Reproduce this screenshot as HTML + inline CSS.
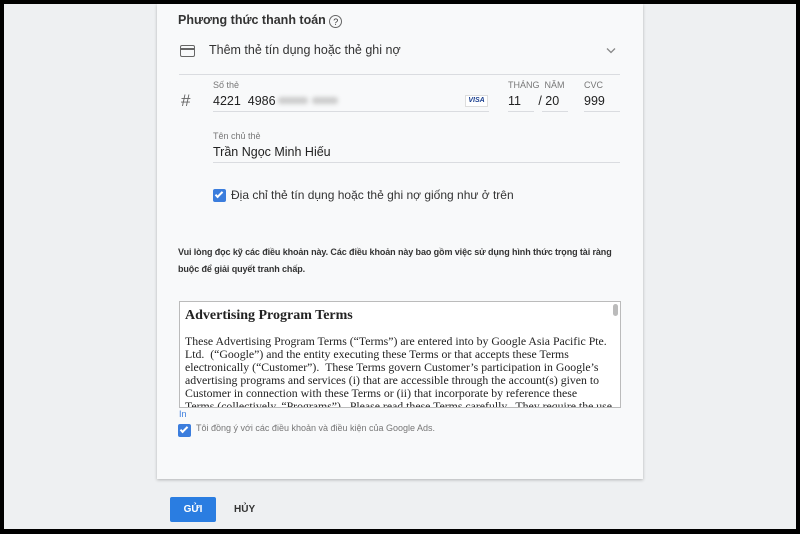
<!DOCTYPE html>
<html><head><meta charset="utf-8"><style>
*{margin:0;padding:0;box-sizing:border-box}
body{width:800px;height:534px;background:#000;position:relative;overflow:hidden;font-family:"Liberation Sans",Arial,sans-serif;color:#222}
.bg{position:absolute;left:4px;top:4px;width:792px;height:525px;background:#eef0f2}
.card{position:absolute;left:157px;top:4px;width:486px;height:475px;background:#f8f9fa;box-shadow:0 1px 3px rgba(0,0,0,.25)}
.a{position:absolute;white-space:nowrap}
.line{position:absolute;height:1px;background:#dadce0}
.lbl{font-size:9px;color:#777}
.chk{position:absolute;width:13px;height:13px;background:#3b7ddd;border-radius:2px}
.ta{position:absolute;left:179px;top:301px;width:442px;height:107px;background:#fff;border:1px solid #bbb;overflow:hidden;font-family:"Liberation Serif",serif;padding:6px 20px 0 5px}
</style></head><body>
<div class="bg"></div>
<div class="card"></div>
<div class="a" style="left:178px;top:13px;font-size:12.5px;font-weight:bold;color:#333">Phương thức thanh toán <span style="display:inline-block;width:13px;height:13px;border:1px solid #666;border-radius:50%;font-size:9px;text-align:center;line-height:12px;font-weight:normal;vertical-align:-1px">?</span></div>
<div class="a" style="left:180px;top:45px;width:15px;height:12px;border:1.5px solid #666;border-radius:2px"><div style="margin-top:2px;height:2px;background:#666"></div></div>
<div class="a" style="left:209px;top:43px;font-size:12.5px;color:#333">Thêm thẻ tín dụng hoặc thẻ ghi nợ</div>
<svg class="a" style="left:606px;top:47px" width="10" height="7"><path d="M1 1.5L5 5.5L9 1.5" stroke="#888" stroke-width="1.3" fill="none"/></svg>
<div class="line" style="left:179px;top:74px;width:441px"></div>
<div class="a lbl" style="left:213px;top:80px">Số thẻ</div>
<div class="a" style="left:181px;top:91px;font-size:17px;color:#666">#</div>
<div class="a" style="left:213px;top:94px;font-size:12.5px">4221 &nbsp;4986</div>
<div class="a" style="left:278px;top:97px;width:30px;height:7px;background:#ccc;border-radius:3px;filter:blur(2px)"></div>
<div class="a" style="left:312px;top:97px;width:26px;height:7px;background:#ccc;border-radius:3px;filter:blur(2px)"></div>
<div class="a" style="left:465px;top:95px;width:23px;height:12px;background:#fff;border:1px solid #ddd;font-size:7px;font-weight:bold;color:#1a3f8f;text-align:center;line-height:10px;font-style:italic">VISA</div>
<div class="line" style="left:213px;top:111px;width:276px"></div>
<div class="a lbl" style="left:508px;top:80px">THÁNG &nbsp;NĂM</div>
<div class="a lbl" style="left:584px;top:80px">CVC</div>
<div class="a" style="left:508px;top:94px;font-size:12.5px">11 &nbsp;&nbsp;&nbsp;&nbsp;/ 20</div>
<div class="a" style="left:584px;top:94px;font-size:12.5px">999</div>
<div class="line" style="left:508px;top:111px;width:26px"></div>
<div class="line" style="left:542px;top:111px;width:26px"></div>
<div class="line" style="left:584px;top:111px;width:36px"></div>
<div class="a lbl" style="left:213px;top:131px">Tên chủ thẻ</div>
<div class="a" style="left:213px;top:145px;font-size:12.5px">Trần Ngọc Minh Hiếu</div>
<div class="line" style="left:213px;top:162px;width:407px"></div>
<div class="chk" style="left:213px;top:189px"><div style="position:absolute;left:4px;top:1px;width:4px;height:8px;border:solid #fff;border-width:0 2px 2px 0;transform:rotate(45deg)"></div></div>
<div class="a" style="left:231px;top:188px;font-size:12px;color:#333">Địa chỉ thẻ tín dụng hoặc thẻ ghi nợ giống như ở trên</div>
<div class="a" style="left:178px;top:244px;font-size:9px;font-weight:bold;color:#333;line-height:17px;letter-spacing:-0.1px">Vui lòng đọc kỹ các điều khoản này. Các điều khoản này bao gồm việc sử dụng hình thức trọng tài ràng<br>buộc để giải quyết tranh chấp.</div>
<div class="ta">
<div style="font-size:14px;font-weight:bold;margin-bottom:11px">Advertising Program Terms</div>
<div style="font-size:11.8px;line-height:12.9px;white-space:nowrap">These Advertising Program Terms (“Terms”) are entered into by Google Asia Pacific Pte.<br>Ltd. &nbsp;(“Google”) and the entity executing these Terms or that accepts these Terms<br>electronically (“Customer”). &nbsp;These Terms govern Customer’s participation in Google’s<br>advertising programs and services (i) that are accessible through the account(s) given to<br>Customer in connection with these Terms or (ii) that incorporate by reference these<br>Terms (collectively, “Programs”). &nbsp;Please read these Terms carefully. &nbsp;They require the use</div>
<div style="position:absolute;right:2px;top:2px;width:5px;height:12px;background:#bbb;border-radius:3px"></div>
</div>
<div class="a" style="left:179px;top:409px;font-size:9px;color:#3b7ddd">In</div>
<div class="chk" style="left:178px;top:424px"><div style="position:absolute;left:4px;top:1px;width:4px;height:8px;border:solid #fff;border-width:0 2px 2px 0;transform:rotate(45deg)"></div></div>
<div class="a" style="left:196px;top:423px;font-size:9px;color:#777">Tôi đồng ý với các điều khoản và điều kiện của Google Ads.</div>
<div class="a" style="left:170px;top:497px;width:46px;height:25px;background:#2a7de1;border-radius:2px;color:#fff;font-size:10px;font-weight:bold;text-align:center;line-height:25px">GỬI</div>
<div class="a" style="left:234px;top:504px;font-size:10px;font-weight:bold;color:#333">HỦY</div>
</body></html>
